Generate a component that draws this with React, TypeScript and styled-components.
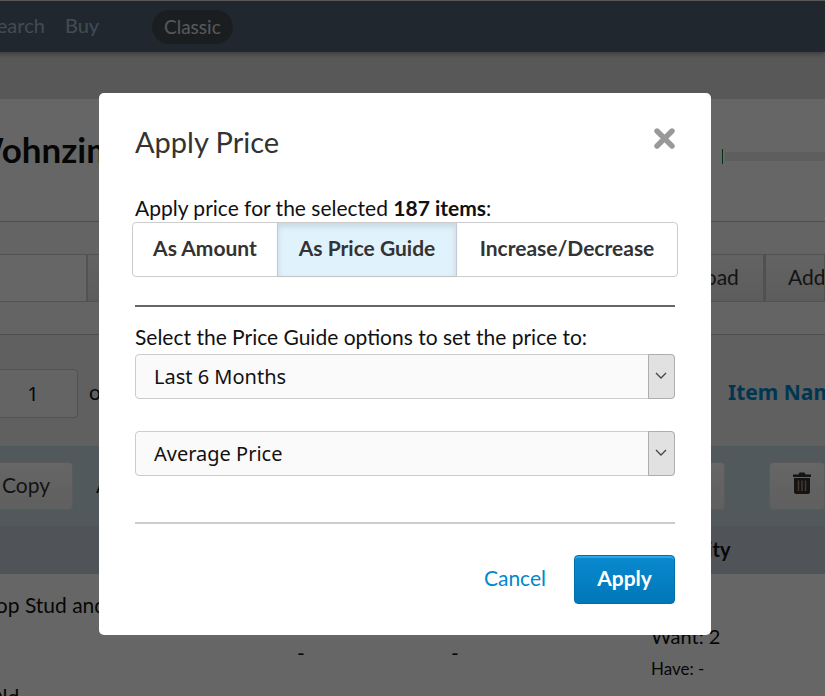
import React, { useState } from 'react';
import styled, { createGlobalStyle, css } from 'styled-components';

const GlobalStyle = createGlobalStyle`
  *, *::before, *::after { box-sizing: border-box; }
  body {
    margin: 0;
    background: #ffffff;
    color: #111111;
    font-family: Lato, "Open Sans", sans-serif;
    font-size: 21px;
    line-height: 24px;
  }
  button, input, select { font: inherit; color: inherit; }
  h1, h2, p { margin: 0; }
`;

const Viewport = styled.div`
  height: 100vh;
  overflow: hidden;
`;

/* The list page is scrolled sideways under the dialog. */
const Page = styled.div`
  margin-left: -40px;
  white-space: nowrap;
`;

const NavBar = styled.nav`
  position: relative;
  display: flex;
  align-items: center;
  height: 52px;
  padding-left: 26px;
  border-top: 1px solid #dcdcdc;
  background: #526277;
  box-shadow: 0 2px 5px rgba(0, 0, 0, 0.35);
`;

const NavLink = styled.a`
  width: 79px;
  padding-bottom: 4px;
  font-size: 20px;
  color: #a3bfd1;
  text-decoration: none;
`;

const ModeLink = styled.a`
  margin-left: 8px;
  padding: 5px 12px;
  border-radius: 17px;
  background: #414b51;
  font-size: 19px;
  color: #dddddd;
  text-decoration: none;
`;

const Gap = styled.div`
  height: 47px;
  background: #dcdcdc;
`;

const TitleSection = styled.header`
  display: flex;
  align-items: flex-start;
  justify-content: space-between;
  height: 123px;
  padding: 28px 0 0 7px;
  border-bottom: 1px solid #c4c4c4;
  background: #ffffff;
`;

const PageTitle = styled.h1`
  font-size: 35px;
  font-weight: 700;
  line-height: 44px;
`;

const Meter = styled.div`
  display: flex;
  align-items: center;
  width: 103px;
  height: 15px;
  margin-top: 22px;
  border-left: 1px solid #00802b;
`;

const MeterTrack = styled.div`
  flex: 1;
  height: 9px;
  margin-left: 2px;
  background: #ececec;
`;

const ToolSection = styled.div`
  display: flex;
  align-items: center;
  justify-content: space-between;
  height: 113px;
  border-bottom: 1px solid #c4c4c4;
  background: #fafafa;
`;

const SearchGroup = styled.div`
  display: flex;
  height: 48px;
`;

const SearchInput = styled.input`
  width: 127px;
  border: 1px solid #cccccc;
  background: #ffffff;
`;

const ToolButton = styled.button<{ $width: number }>`
  width: ${({ $width }) => $width}px;
  padding: 0 22px 3px;
  border: 1px solid #cccccc;
  background: linear-gradient(#f8f8f8, #e6e6e6);
  color: #333333;
  text-align: left;
  overflow: hidden;
  & + & { border-left: 2px solid #c8c8c8; }
`;

const ToolButtons = styled.div`
  display: flex;
  height: 48px;
`;

const PagerSection = styled.div`
  display: flex;
  align-items: center;
  justify-content: space-between;
  height: 111px;
  padding-top: 6px;
  background: #f0f0f0;
`;

const PagerField = styled.label`
  display: flex;
  align-items: center;
  gap: 11px;
  flex-direction: row-reverse;
`;

const PagerText = styled.span`
  padding-bottom: 3px;
`;

const PageInput = styled.input`
  width: 118px;
  height: 49px;
  padding: 0 0 0 28px;
  border: 1px solid #cccccc;
  border-radius: 4px;
  background: #fafafa;
  font-family: "Noto Sans", sans-serif;
  font-size: 20px;
  text-align: center;
`;

const SortLink = styled.a`
  width: 97px;
  padding-bottom: 4px;
  overflow: hidden;
  font-family: "Noto Sans", sans-serif;
  font-weight: 700;
  font-size: 21px;
  color: #0088cc;
  text-decoration: none;
`;

const ActionSection = styled.div`
  display: flex;
  align-items: center;
  gap: 23px;
  height: 80px;
  background: #cddee6;
`;

const ActionText = styled.span`
  padding-bottom: 3px;
`;

const ActionButton = styled.button<{ $width: number }>`
  width: ${({ $width }) => $width}px;
  height: 48px;
  padding: 0 22px 3px;
  border: 1px solid #e2e2e2;
  border-radius: 4px;
  background: linear-gradient(#ffffff, #eeeeee);
  color: #333333;
  text-align: right;
`;

const ActionEnd = styled.div`
  display: flex;
  gap: 44px;
  margin-left: auto;
`;

const Table = styled.table`
  width: 100%;
  table-layout: fixed;
  border-collapse: collapse;
  th, td { padding: 0; text-align: left; vertical-align: top; overflow: hidden; }
  thead tr { height: 48px; background: #c8d0dd; }
  th { padding-bottom: 3px; vertical-align: middle; font-size: 20px; font-weight: 700; }
  td { height: 130px; padding-top: 19px; }
`;

const Col = styled.col<{ $width?: number }>`
  width: ${({ $width }) => ($width ? `${$width}px` : 'auto')};
`;

const ItemCell = styled.div`
  display: flex;
  flex-direction: column;
  gap: 68px;
  padding-left: 26px;
`;

const DashCell = styled.div`
  padding-top: 48px;
`;

const QuantityCell = styled.div`
  display: flex;
  flex-direction: column;
  gap: 9px;
  padding-top: 31px;
  font-size: 20px;
`;

const Small = styled.span`
  font-size: 17px;
`;

const Backdrop = styled.div`
  position: fixed;
  inset: 0;
  display: flex;
  justify-content: center;
  align-items: flex-start;
  padding: 93px 15px 0 0;
  background: rgba(0, 0, 0, 0.6);
`;

const Dialog = styled.section`
  width: 100%;
  max-width: 612px;
  padding: 31px 36px;
  border-radius: 5px;
  background: #ffffff;
`;

const DialogHeader = styled.header`
  display: flex;
  justify-content: space-between;
  align-items: flex-start;
  margin-bottom: 36px;
`;

const DialogTitle = styled.h2`
  font-size: 29px;
  font-weight: 400;
  line-height: 36px;
  color: #333333;
`;

const CloseButton = styled.button`
  display: flex;
  margin-top: 4px;
  padding: 0;
  border: 0;
  background: none;
  color: #999999;
`;

const Tabs = styled.div`
  display: grid;
  grid-template-columns: 144fr 180fr 220fr;
  height: 55px;
  margin: 2px -3px 28px;
  border: 1px solid #cccccc;
  border-radius: 4px;
`;

const Tab = styled.button<{ $active: boolean }>`
  padding: 0 0 3px;
  border: 0;
  border-radius: 3px;
  background: transparent;
  color: #333333;
  font-weight: 700;
  ${({ $active }) =>
    $active &&
    css`
      border-left: 1px solid #c4cbd0;
      border-right: 1px solid #c4cbd0;
      border-radius: 0;
      background: #e0f2fc;
      box-shadow: inset 0 3px 6px rgba(0, 0, 0, 0.12), 0 1px 2px rgba(0, 0, 0, 0.05);
    `}
`;

const Rule = styled.hr<{ $color: string }>`
  height: 2px;
  margin: 0;
  border: 0;
  background: ${({ $color }) => $color};
`;

const Options = styled.div`
  display: flex;
  flex-direction: column;
  margin: 18px 0 46px;
`;

const SelectFrame = styled.div`
  display: grid;
  grid-template-columns: 1fr 27px;
  height: 45px;
  margin-top: 5px;
  & + & { margin-top: 32px; }
`;

const Select = styled.select`
  grid-area: 1 / 1 / 2 / 3;
  appearance: none;
  padding: 1px 40px 0 18px;
  border: 1px solid #cccccc;
  border-radius: 4px;
  background: #fafafa;
  font-family: "Noto Sans", sans-serif;
  font-size: 20px;
  color: #111111;
`;

const Arrow = styled.span`
  grid-area: 1 / 2 / 2 / 3;
  display: flex;
  align-items: center;
  justify-content: center;
  padding: 0 2px 2px 0;
  border: 1px solid #adadad;
  border-radius: 0 4px 4px 0;
  background: #e1e1e1;
  pointer-events: none;
`;

const Footer = styled.footer`
  display: flex;
  justify-content: flex-end;
  align-items: center;
  gap: 28px;
  margin-top: 31px;
`;

const CancelLink = styled.a`
  padding-bottom: 3px;
  color: #0088cc;
  text-decoration: none;
`;

const ApplyButton = styled.button`
  width: 101px;
  height: 49px;
  padding: 0 0 3px;
  border: 1px solid #0070a8;
  border-radius: 4px;
  background: linear-gradient(#0a8ad0, #0077b8);
  box-shadow: inset 0 2px 0 #2ba6e6;
  color: #ffffff;
  font-weight: 700;
`;

const CloseIcon = () => (
  <svg width="21" height="21" viewBox="0 0 21 21" aria-hidden="true">
    <path d="M3 3 18 18M18 3 3 18" stroke="currentColor" strokeWidth="5.4" strokeLinecap="round" />
  </svg>
);

const ChevronIcon = () => (
  <svg width="12" height="8" viewBox="0 0 12 8" aria-hidden="true">
    <path d="M1 1 6 6 11 1" fill="none" stroke="#444444" strokeWidth="1.3" />
  </svg>
);

const TrashIcon = () => (
  <svg width="20" height="22" viewBox="0 0 20 22" aria-hidden="true">
    <path d="M1 2.5h5.5L7.5 0.5h5l1 2H19v2.5H1z" fill="#333333" />
    <path d="M2 6h16v14q0 2-2 2H4q-2 0-2-2z" fill="#333333" />
    <path d="M6.5 8.5v10.5M10 8.5v10.5M13.5 8.5v10.5" stroke="#b08a6a" strokeWidth="1.5" />
  </svg>
);

const PRICE_MODES = ['As Amount', 'As Price Guide', 'Increase/Decrease'];

function PriceSelect({ label, options }: { label: string; options: string[] }) {
  return (
    <SelectFrame>
      <Select aria-label={label}>
        {options.map((option) => (
          <option key={option}>{option}</option>
        ))}
      </Select>
      <Arrow>
        <ChevronIcon />
      </Arrow>
    </SelectFrame>
  );
}

function ListPage() {
  return (
    <Page>
      <NavBar>
        <NavLink href="#search">Search</NavLink>
        <NavLink href="#buy">Buy</NavLink>
        <ModeLink href="#classic">Classic</ModeLink>
      </NavBar>
      <Gap />
      <TitleSection>
        <PageTitle>Wohnzimmer</PageTitle>
        <Meter>
          <MeterTrack />
        </Meter>
      </TitleSection>
      <ToolSection>
        <SearchGroup>
          <SearchInput aria-label="Search items" />
          <ToolButton $width={60} aria-label="Search" />
        </SearchGroup>
        <ToolButtons>
          <ToolButton $width={143}>Download</ToolButton>
          <ToolButton $width={61}>Add</ToolButton>
        </ToolButtons>
      </ToolSection>
      <PagerSection>
        <PagerField>
          <PagerText>of 8</PagerText>
          <PageInput defaultValue="1" />
        </PagerField>
        <SortLink href="#sort">Item Name</SortLink>
      </PagerSection>
      <ActionSection>
        <ActionButton $width={113}>Copy</ActionButton>
        <ActionText>Apply</ActionText>
        <ActionEnd>
          <ActionButton $width={60} aria-label="Edit" />
          <ActionButton $width={56} aria-label="Delete">
            <TrashIcon />
          </ActionButton>
        </ActionEnd>
      </ActionSection>
      <Table>
        <colgroup>
          <Col $width={337} />
          <Col $width={154} />
          <Col />
          <Col $width={174} />
        </colgroup>
        <thead>
          <tr>
            <th />
            <th />
            <th />
            <th>Quantity</th>
          </tr>
        </thead>
        <tbody>
          <tr>
            <td>
              <ItemCell>
                <span>Top Stud and Groove</span>
                <span>Old</span>
              </ItemCell>
            </td>
            <td>
              <DashCell>-</DashCell>
            </td>
            <td>
              <DashCell>-</DashCell>
            </td>
            <td>
              <QuantityCell>
                <span>Want: 2</span>
                <Small>Have: -</Small>
              </QuantityCell>
            </td>
          </tr>
        </tbody>
      </Table>
    </Page>
  );
}

export default function App() {
  const [mode, setMode] = useState('As Price Guide');

  return (
    <Viewport>
      <GlobalStyle />
      <ListPage />
      <Backdrop>
        <Dialog role="dialog" aria-modal="true" aria-labelledby="dialog-title">
          <DialogHeader>
            <DialogTitle id="dialog-title">Apply Price</DialogTitle>
            <CloseButton type="button" aria-label="Close">
              <CloseIcon />
            </CloseButton>
          </DialogHeader>
          <p>
            Apply price for the selected <b>187 items</b>:
          </p>
          <Tabs>
            {PRICE_MODES.map((name) => (
              <Tab key={name} type="button" $active={name === mode} aria-pressed={name === mode} onClick={() => setMode(name)}>
                {name}
              </Tab>
            ))}
          </Tabs>
          <Rule $color="#666666" />
          <Options>
            <p>Select the Price Guide options to set the price to:</p>
            <PriceSelect label="Period" options={['Last 6 Months', 'Current']} />
            <PriceSelect label="Price" options={['Average Price', 'Minimum Price', 'Maximum Price']} />
          </Options>
          <Rule $color="#cccccc" />
          <Footer>
            <CancelLink href="#cancel">Cancel</CancelLink>
            <ApplyButton type="button">Apply</ApplyButton>
          </Footer>
        </Dialog>
      </Backdrop>
    </Viewport>
  );
}
